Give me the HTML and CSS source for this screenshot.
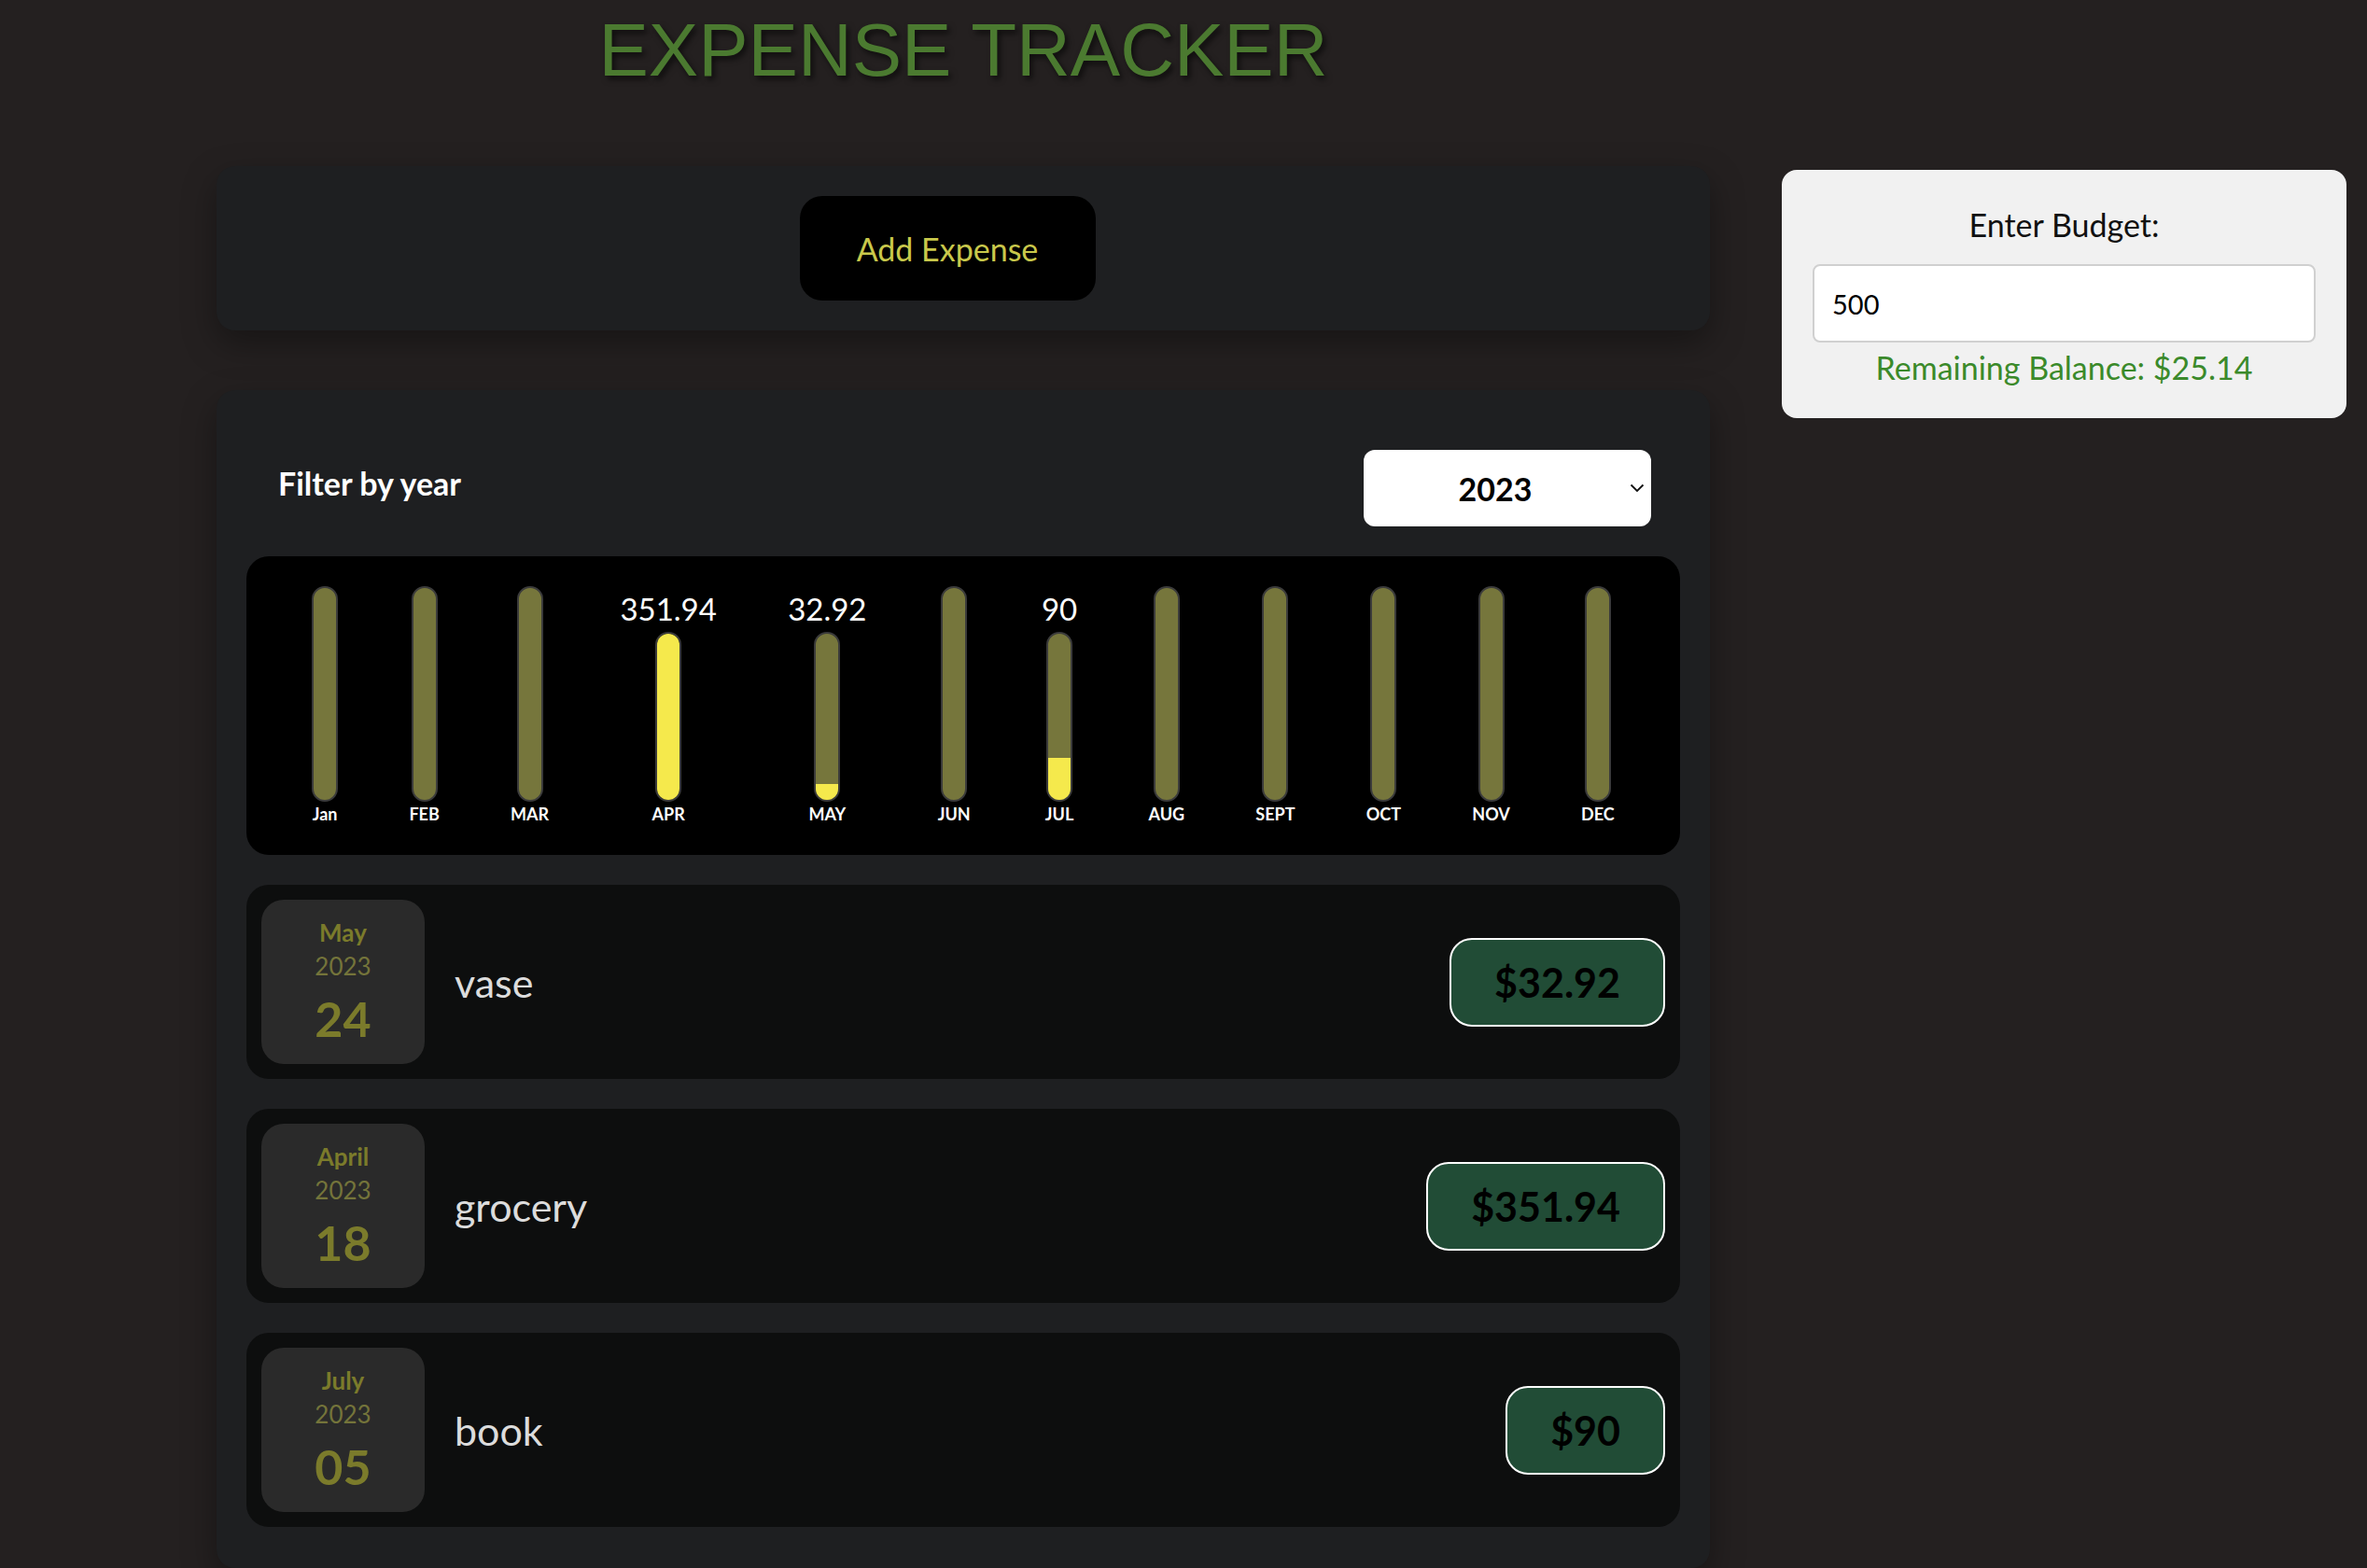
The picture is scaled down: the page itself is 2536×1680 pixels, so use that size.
FILE: index.html
```html
<!DOCTYPE html>
<html lang="en">
<head>
<meta charset="utf-8">
<title>Expense Tracker</title>
<link rel="stylesheet" href="styles.css">
</head>
<body>
<div class="page">
  <main class="main-col">
    <h1 class="title">EXPENSE TRACKER</h1>
    <section class="card add-card">
      <button class="add-btn">Add Expense</button>
    </section>
    <section class="card expenses">
      <div class="filter-row">
        <span class="filter-label">Filter by year</span>
        <div class="year-select">
          <span class="year-value">2023</span>
          <svg class="chevron" width="16" height="10" viewBox="0 0 16 10"><path d="M1.5 1.5 L8 8 L14.5 1.5" fill="none" stroke="#111" stroke-width="1.8"/></svg>
        </div>
      </div>
      <div class="chart">
        <div class="chart-col"><div class="bar"><div class="fill" style="height:0%"></div></div><div class="month">Jan</div></div>
        <div class="chart-col"><div class="bar"><div class="fill" style="height:0%"></div></div><div class="month">FEB</div></div>
        <div class="chart-col"><div class="bar"><div class="fill" style="height:0%"></div></div><div class="month">MAR</div></div>
        <div class="chart-col"><div class="value">351.94</div><div class="bar"><div class="fill" style="height:100%"></div></div><div class="month">APR</div></div>
        <div class="chart-col"><div class="value">32.92</div><div class="bar"><div class="fill" style="height:9.35%"></div></div><div class="month">MAY</div></div>
        <div class="chart-col"><div class="bar"><div class="fill" style="height:0%"></div></div><div class="month">JUN</div></div>
        <div class="chart-col"><div class="value">90</div><div class="bar"><div class="fill" style="height:25.57%"></div></div><div class="month">JUL</div></div>
        <div class="chart-col"><div class="bar"><div class="fill" style="height:0%"></div></div><div class="month">AUG</div></div>
        <div class="chart-col"><div class="bar"><div class="fill" style="height:0%"></div></div><div class="month">SEPT</div></div>
        <div class="chart-col"><div class="bar"><div class="fill" style="height:0%"></div></div><div class="month">OCT</div></div>
        <div class="chart-col"><div class="bar"><div class="fill" style="height:0%"></div></div><div class="month">NOV</div></div>
        <div class="chart-col"><div class="bar"><div class="fill" style="height:0%"></div></div><div class="month">DEC</div></div>
      </div>
      <ul class="expense-list">
        <li class="expense">
          <div class="date"><div class="date-month">May</div><div class="date-year">2023</div><div class="date-day">24</div></div>
          <h2 class="expense-title">vase</h2>
          <div class="price">$32.92</div>
        </li>
        <li class="expense">
          <div class="date"><div class="date-month">April</div><div class="date-year">2023</div><div class="date-day">18</div></div>
          <h2 class="expense-title">grocery</h2>
          <div class="price">$351.94</div>
        </li>
        <li class="expense">
          <div class="date"><div class="date-month">July</div><div class="date-year">2023</div><div class="date-day">05</div></div>
          <h2 class="expense-title">book</h2>
          <div class="price">$90</div>
        </li>
      </ul>
    </section>
  </main>
  <aside class="side-col">
    <div class="budget">
      <div class="budget-label">Enter Budget:</div>
      <input class="budget-input" type="text" value="500">
      <div class="balance">Remaining Balance: $25.14</div>
    </div>
  </aside>
</div>
</body>
</html>
```

FILE: styles.css
```css
html, body {
  margin: 0;
  height: 100%;
  overflow: hidden;
}

body {
  background: #242020;
  font-family: Lato, "Noto Sans", sans-serif;
}

.page {
  display: flex;
  gap: 77px;
  padding-left: 232px;
}

.main-col {
  width: 1600px;
  flex: none;
}

.title {
  margin: 8px 0 78px;
  font-family: "Liberation Sans", Arial, sans-serif;
  font-weight: 400;
  font-size: 80px;
  line-height: 92px;
  text-align: center;
  color: #4b7a30;
  text-shadow: 3px 4px 6px rgba(0, 0, 0, 0.6);
}

.card {
  background: #1e1f21;
  border-radius: 20px;
  box-shadow: 0 14px 36px rgba(0, 0, 0, 0.35);
}

.add-card {
  display: flex;
  justify-content: center;
  padding: 32px 34px 32px 0;
}

.add-btn {
  width: 317px;
  height: 112px;
  background: #000;
  color: #c9c84b;
  border: none;
  border-radius: 24px;
  font-family: Lato, sans-serif;
  font-size: 34px;
  padding: 0;
}

.expenses {
  margin-top: 64px;
  padding: 64px 32px 44px;
}

.filter-row {
  display: flex;
  justify-content: space-between;
  align-items: center;
  padding: 0 31px 0 34px;
  margin-bottom: 32px;
}

.filter-label {
  color: #fff;
  font-weight: 700;
  font-size: 34px;
  margin-bottom: 12px;
}

.year-select {
  width: 308px;
  height: 82px;
  box-sizing: border-box;
  background: #fff;
  border-radius: 12px;
  display: flex;
  align-items: center;
  padding-right: 7px;
}

.year-value {
  flex: 1;
  text-align: center;
  margin-right: 3px;
  font-weight: 700;
  font-size: 34px;
  color: #000;
}

.chart {
  background: #000;
  border-radius: 24px;
  padding: 32px;
  height: 320px;
  box-sizing: border-box;
  display: flex;
  justify-content: space-around;
}

.chart-col {
  display: flex;
  flex-direction: column;
  align-items: center;
}

.value {
  color: #fff;
  font-size: 33px;
  line-height: 49px;
}

.bar {
  flex: 1;
  width: 28px;
  box-sizing: border-box;
  border: 2px solid #3b3b3b;
  background: #76763c;
  border-radius: 14px;
  overflow: hidden;
  display: flex;
  flex-direction: column;
  justify-content: flex-end;
}

.fill {
  background: #f5e94c;
}

.month {
  color: #fff;
  font-weight: 700;
  font-size: 18px;
  line-height: 23px;
  margin-top: 2px;
}

.expense-list {
  list-style: none;
  margin: 32px 0 0;
  padding: 0;
  display: flex;
  flex-direction: column;
  gap: 32px;
}

.expense {
  background: #0d0e0e;
  border-radius: 24px;
  padding: 16px;
  display: flex;
  align-items: center;
}

.date {
  width: 175px;
  height: 176px;
  flex: none;
  background: #2a2a2a;
  border-radius: 24px;
  display: flex;
  flex-direction: column;
  align-items: center;
  justify-content: center;
  color: #7b7b2b;
}

.date-month {
  font-weight: 700;
  font-size: 26px;
  line-height: 36px;
}

.date-year {
  font-size: 26px;
  line-height: 36px;
  color: #74743a;
}

.date-day {
  font-weight: 700;
  font-size: 52px;
  line-height: 64px;
  margin-top: 6px;
}

.expense-title {
  flex: 1;
  margin: 0 0 0 32px;
  color: #dcdcdc;
  font-weight: 400;
  font-size: 43px;
}

.price {
  border: 2px solid #fff;
  background: #214c36;
  border-radius: 24px;
  padding: 18px 46px;
  font-weight: 700;
  font-size: 43px;
  line-height: 55px;
  color: #000;
}

.side-col {
  padding-top: 182px;
  width: 605px;
  flex: none;
}

.budget {
  background: #f1f1f1;
  border-radius: 16px;
  padding: 37px 33px 32px;
  text-align: center;
}

.budget-label {
  font-size: 34px;
  line-height: 44px;
  color: #111;
}

.budget-input {
  display: block;
  width: 100%;
  height: 84px;
  box-sizing: border-box;
  margin-top: 20px;
  border: 2px solid #d0d0d0;
  border-radius: 8px;
  padding: 0 19px;
  background: #fff;
  font-family: Lato, sans-serif;
  font-size: 29px;
  color: #000;
}

.balance {
  margin-top: 5px;
  color: #3b8a2b;
  font-size: 34px;
  line-height: 44px;
}
```
